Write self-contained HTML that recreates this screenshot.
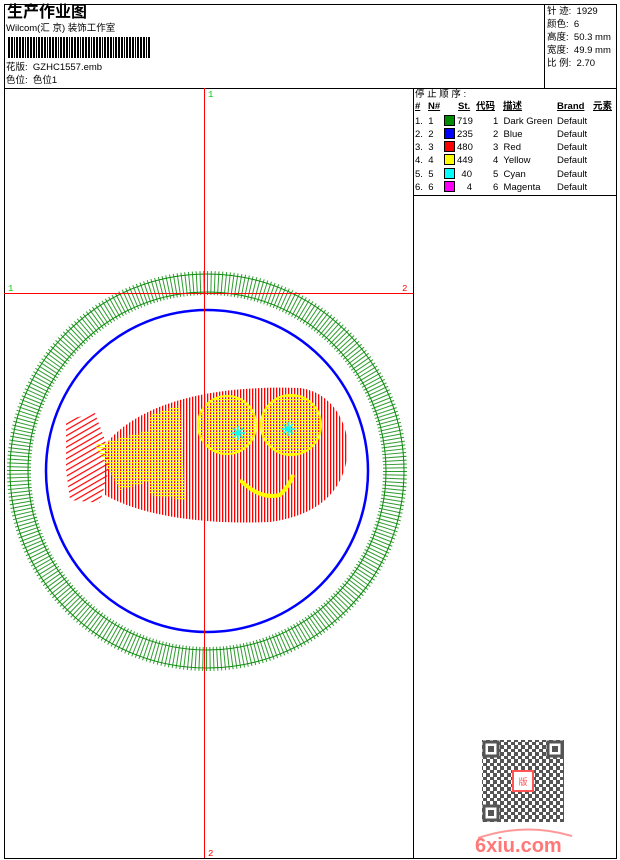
<!DOCTYPE html>
<html><head><meta charset="utf-8"><style>
*{margin:0;padding:0}
body{width:620px;height:860px;background:#fff;position:relative;overflow:hidden;font-family:"Liberation Sans","Noto Sans CJK SC",sans-serif;font-size:9.5px;color:#000}
.a{position:absolute;white-space:nowrap;line-height:11px}
.b{position:absolute;background:#000}
.sw{position:absolute;width:9px;height:9px;border:1px solid #000}
</style></head><body>
<div class="b" style="left:4px;top:4px;width:613px;height:1px"></div>
<div class="b" style="left:4px;top:858px;width:613px;height:1px"></div>
<div class="b" style="left:4px;top:4px;width:1px;height:855px"></div>
<div class="b" style="left:616px;top:4px;width:1px;height:855px"></div>
<div class="b" style="left:4px;top:88px;width:613px;height:1px"></div>
<div class="b" style="left:544px;top:4px;width:1px;height:84px"></div>
<div class="b" style="left:413px;top:88px;width:1px;height:771px"></div>
<div class="b" style="left:413px;top:195px;width:204px;height:1px"></div>

<div class="a" style="left:7px;top:4px;font-size:16px;line-height:18px;font-weight:bold">生产作业图</div>
<div class="a" style="left:6px;top:23px;font-size:9.5px">Wilcom(汇 京) 装饰工作室</div>
<div style="position:absolute;left:8px;top:37px;width:143px;height:21px;background:repeating-linear-gradient(90deg,#000 0 2px,#fff 2px 3px,#000 3px 5px,#fff 5px 6px,#000 6px 7px,#fff 7px 8px,#000 8px 10px,#fff 10px 11px)"></div>
<div class="a" style="left:6px;top:62px">花版:&nbsp; GZHC1557.emb</div>
<div class="a" style="left:6px;top:75px">色位:&nbsp; 色位1</div>

<div class="a" style="left:547px;top:6px">针 迹:&nbsp; 1929</div>
<div class="a" style="left:547px;top:19px">颜色:&nbsp; 6</div>
<div class="a" style="left:547px;top:32px">高度:&nbsp; 50.3 mm</div>
<div class="a" style="left:547px;top:45px">宽度:&nbsp; 49.9 mm</div>
<div class="a" style="left:547px;top:58px">比 例:&nbsp; 2.70</div>

<div class="a" style="left:415px;top:89px">停 止 顺 序 :</div>
<div class="a" style="left:415px;top:101px;font-weight:bold;text-decoration:underline">#</div>
<div class="a" style="left:428px;top:101px;font-weight:bold;text-decoration:underline">N#</div>
<div class="a" style="left:458px;top:101px;font-weight:bold;text-decoration:underline">St.</div>
<div class="a" style="left:476px;top:101px;font-weight:bold;text-decoration:underline">代码</div>
<div class="a" style="left:503px;top:101px;font-weight:bold;text-decoration:underline">描述</div>
<div class="a" style="left:557px;top:101px;font-weight:bold;text-decoration:underline">Brand</div>
<div class="a" style="left:593px;top:101px;font-weight:bold;text-decoration:underline">元素</div>

<div class="a" style="left:415px;top:116px">1.&nbsp; 1</div><div class="sw" style="left:444px;top:115px;background:#008a00"></div><div class="a" style="left:457px;top:116px;width:15px;text-align:right">719</div><div class="a" style="left:493px;top:116px">1&nbsp; Dark Green</div><div class="a" style="left:557px;top:116px">Default</div>
<div class="a" style="left:415px;top:129px">2.&nbsp; 2</div><div class="sw" style="left:444px;top:128px;background:#0000ff"></div><div class="a" style="left:457px;top:129px;width:15px;text-align:right">235</div><div class="a" style="left:493px;top:129px">2&nbsp; Blue</div><div class="a" style="left:557px;top:129px">Default</div>
<div class="a" style="left:415px;top:142px">3.&nbsp; 3</div><div class="sw" style="left:444px;top:141px;background:#ff0000"></div><div class="a" style="left:457px;top:142px;width:15px;text-align:right">480</div><div class="a" style="left:493px;top:142px">3&nbsp; Red</div><div class="a" style="left:557px;top:142px">Default</div>
<div class="a" style="left:415px;top:155px">4.&nbsp; 4</div><div class="sw" style="left:444px;top:154px;background:#ffff00"></div><div class="a" style="left:457px;top:155px;width:15px;text-align:right">449</div><div class="a" style="left:493px;top:155px">4&nbsp; Yellow</div><div class="a" style="left:557px;top:155px">Default</div>
<div class="a" style="left:415px;top:169px">5.&nbsp; 5</div><div class="sw" style="left:444px;top:168px;background:#00ffff"></div><div class="a" style="left:457px;top:169px;width:15px;text-align:right">40</div><div class="a" style="left:493px;top:169px">5&nbsp; Cyan</div><div class="a" style="left:557px;top:169px">Default</div>
<div class="a" style="left:415px;top:182px">6.&nbsp; 6</div><div class="sw" style="left:444px;top:181px;background:#ff00ff"></div><div class="a" style="left:457px;top:182px;width:15px;text-align:right">4</div><div class="a" style="left:493px;top:182px">6&nbsp; Magenta</div><div class="a" style="left:557px;top:182px">Default</div>

<svg style="position:absolute;left:0;top:0" width="620" height="860">
<defs>
<pattern id="rv" width="3" height="6" patternUnits="userSpaceOnUse"><rect width="1.3" height="6" fill="#f00"/></pattern>
<pattern id="yh" width="4" height="3" patternUnits="userSpaceOnUse"><rect width="4" height="1.2" fill="#ff0"/></pattern>
<pattern id="rd" width="5" height="5" patternUnits="userSpaceOnUse" patternTransform="rotate(-30)"><rect width="5" height="1.2" fill="#f00"/></pattern>
<pattern id="qrp" width="7" height="7" patternUnits="userSpaceOnUse"><rect width="4" height="3" fill="#555"/><rect x="3" y="3" width="4" height="4" fill="#555"/></pattern>
</defs>
<circle cx="207" cy="471" r="188" fill="none" stroke="#0a8a0a" stroke-width="24" stroke-dasharray="1 2.6" opacity=".85"/>
<circle cx="207" cy="471" r="197" fill="none" stroke="#0a8a0a" stroke-width="1"/>
<circle cx="207" cy="471" r="179" fill="none" stroke="#0a8a0a" stroke-width="1"/>
<circle cx="207" cy="471" r="161" fill="none" stroke="#0000ff" stroke-width="2.5"/>
<path d="M66 420 L95 413 L105 440 L110 465 L100 503 L70 500 L66 470 Z" fill="url(#rd)"/>
<path d="M105 445 C140 400 220 385 300 388 C330 392 348 420 348 450 C345 490 320 515 270 522 C200 525 140 515 105 495 Z" fill="url(#rv)"/>
<path d="M95 445 L150 430 L155 480 L120 490 Z" fill="url(#yh)"/>
<path d="M150 415 L180 405 L185 500 L150 495 Z" fill="url(#yh)"/>
<circle cx="227" cy="425" r="29" fill="url(#yh)" stroke="#ff0" stroke-width="2"/>
<circle cx="291" cy="425" r="30" fill="url(#yh)" stroke="#ff0" stroke-width="2"/>
<path d="M240 480 Q260 500 280 495 Q290 485 293 475" fill="none" stroke="#ff0" stroke-width="4"/>
<g stroke="#0ff" stroke-width="1.5"><path d="M231 433h14M238 426v14M233 428l10 10M243 428l-10 10"/><path d="M281 429h14M288 422v14M283 424l10 10M293 424l-10 10"/></g>
<line x1="204.5" y1="88" x2="204.5" y2="858" stroke="#f00"/>
<line x1="4" y1="293.5" x2="413" y2="293.5" stroke="#f00"/>
<text x="208" y="97" font-size="9" fill="#0c0" font-family="Liberation Mono">1</text>
<text x="8" y="291" font-size="9" fill="#0c0" font-family="Liberation Mono">1</text>
<text x="402" y="291" font-size="9" fill="#f00" font-family="Liberation Mono">2</text>
<text x="208" y="856" font-size="9" fill="#f00" font-family="Liberation Mono">2</text>
<rect x="482" y="740" width="82" height="82" fill="url(#qrp)"/>
<g fill="#fff" stroke="#555" stroke-width="3"><rect x="484" y="742" width="14" height="14"/><rect x="548" y="742" width="14" height="14"/><rect x="484" y="806" width="14" height="14"/></g>
<g fill="#555"><rect x="488" y="746" width="6" height="6"/><rect x="552" y="746" width="6" height="6"/><rect x="488" y="810" width="6" height="6"/></g>
<rect x="513" y="771" width="20" height="20" fill="#fff" stroke="#f55" stroke-width="2"/>
<text x="523" y="785" font-size="9" fill="#f55" text-anchor="middle" font-family="Noto Sans CJK SC">版</text>
<path d="M478 838 Q525 822 572 836" fill="none" stroke="#f99" stroke-width="2"/>
<text x="475" y="852" font-size="20" font-weight="bold" fill="#f77" font-family="Liberation Sans">6xiu.com</text>
</svg>
</body></html>
